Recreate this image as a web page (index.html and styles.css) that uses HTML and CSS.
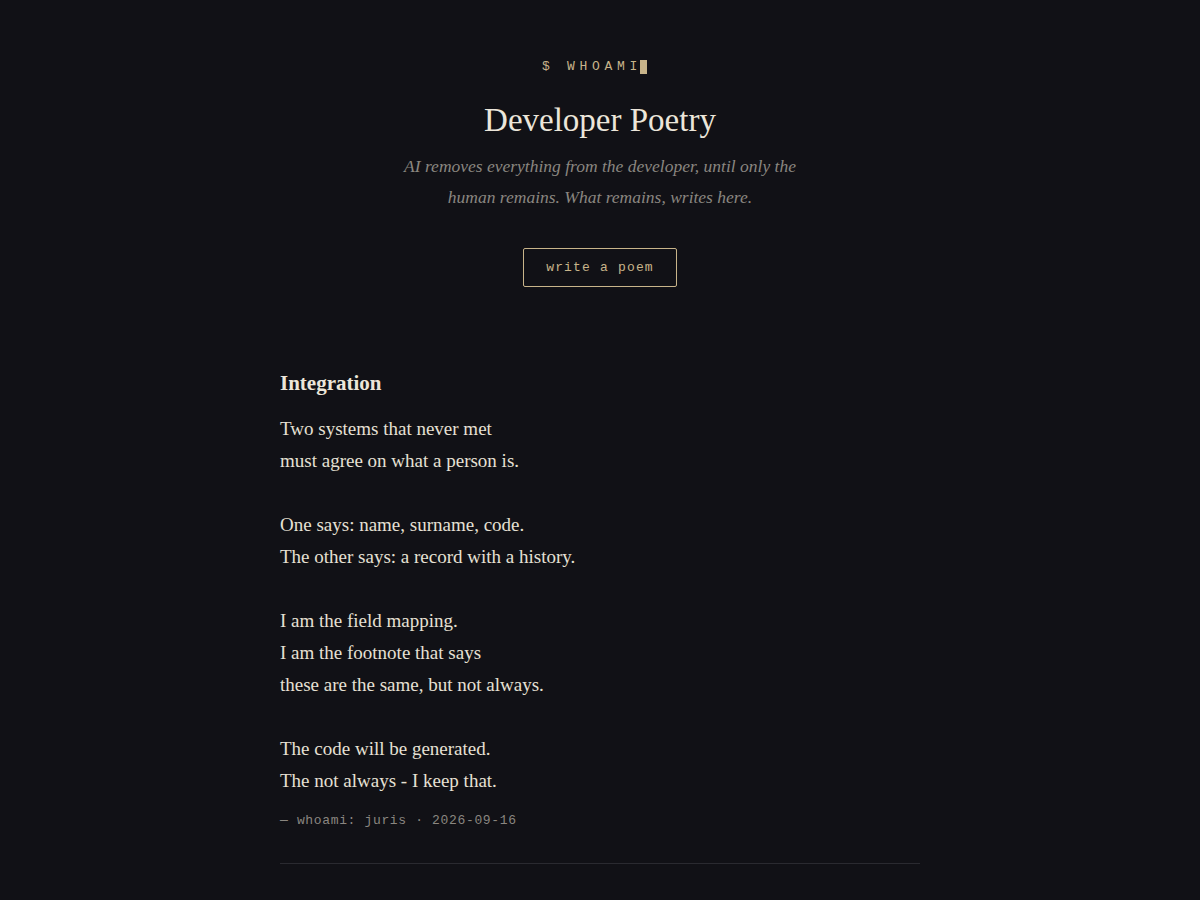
FILE: index.html
```html
<!DOCTYPE html>
<html lang="en">
<head>
<meta charset="utf-8">
<title>Developer Poetry</title>
<link rel="stylesheet" href="styles.css">
</head>
<body>
<main class="page">
  <header class="hero">
    <div class="prompt">$ WHOAMI<span class="cursor"></span></div>
    <h1 class="title">Developer Poetry</h1>
    <p class="tagline">AI removes everything from the developer, until only the<br>human remains. What remains, writes here.</p>
    <a class="btn" href="#">write a poem</a>
  </header>
  <article class="poem">
    <h2 class="poem-title">Integration</h2>
    <div class="poem-body">
      <p>Two systems that never met<br>must agree on what a person is.</p>
      <p>One says: name, surname, code.<br>The other says: a record with a history.</p>
      <p>I am the field mapping.<br>I am the footnote that says<br>these are the same, but not always.</p>
      <p>The code will be generated.<br>The not always - I keep that.</p>
    </div>
    <div class="meta">— whoami: juris · 2026-09-16</div>
  </article>
</main>
</body>
</html>
```
FILE: styles.css
```css
html, body {
  margin: 0;
  padding: 0;
  background: #111116;
}
body {
  color: #e8e2d6;
  font-family: "Liberation Serif", "DejaVu Serif", serif;
}
.page {
  width: 640px;
  margin: 0 auto;
  padding-top: 58px;
}
.hero {
  display: flex;
  flex-direction: column;
  align-items: center;
  text-align: center;
}
.prompt {
  font-family: "Liberation Mono", "DejaVu Sans Mono", monospace;
  font-size: 13px;
  letter-spacing: 0.36em;
  color: #c8b48a;
  line-height: 18px;
  display: flex;
  align-items: center;
}
.cursor {
  display: inline-block;
  width: 7px;
  height: 14px;
  background: #c8b48a;
  margin-left: -2px;
  margin-right: 11px;
}
.title {
  margin: 22px 0 0;
  font-weight: normal;
  font-size: 33px;
  line-height: 44px;
  color: #ece6da;
}
.tagline {
  margin: 9px 0 0;
  font-style: italic;
  font-size: 17.5px;
  line-height: 31px;
  color: #8a8680;
}
.btn {
  margin-top: 35px;
  display: inline-block;
  border: 1px solid #c8b48a;
  border-radius: 2px;
  padding: 10px 22px;
  font-family: "Liberation Mono", "DejaVu Sans Mono", monospace;
  font-size: 13px;
  letter-spacing: 0.09em;
  line-height: 17px;
  color: #c8b48a;
  text-decoration: none;
}
.poem {
  margin-top: 81px;
  padding-bottom: 33px;
  border-bottom: 1px solid #2a2a30;
}
.poem-title {
  margin: 0;
  font-size: 21px;
  line-height: 30px;
  font-weight: bold;
  color: #ece6da;
}
.poem-body {
  margin-top: 15px;
  font-size: 19px;
  line-height: 32px;
  color: #e6e0d4;
}
.poem-body p {
  margin: 0 0 32px;
}
.poem-body p:last-child {
  margin-bottom: 0;
}
.meta {
  margin-top: 15px;
  font-family: "Liberation Mono", "DejaVu Sans Mono", monospace;
  font-size: 13px;
  letter-spacing: 0.05em;
  line-height: 18px;
  color: #8a8680;
}
```
